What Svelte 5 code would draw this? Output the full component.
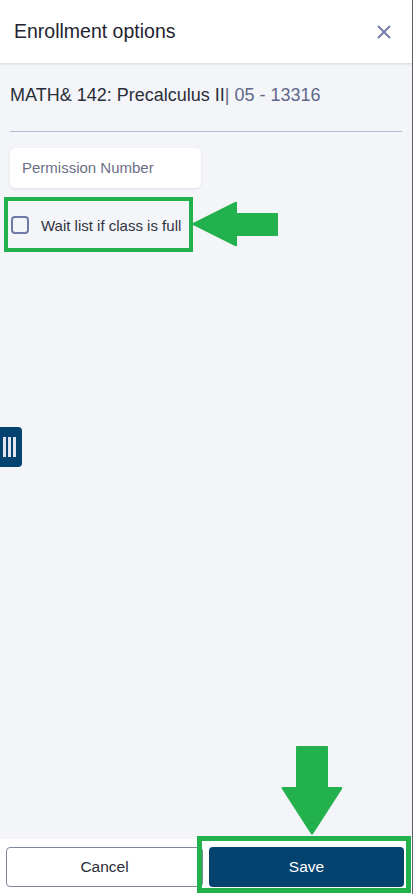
<script>
  let permission = '';
  let waitlist = false;
</script>

<div class="panel">
  <header class="head">
    <h1>Enrollment options</h1>
    <button class="close" aria-label="Close">
      <svg width="14" height="14" viewBox="0 0 14 14"><path d="M1 1 L13 13 M13 1 L1 13" stroke="#6f7aa3" stroke-width="1.8" fill="none" /></svg>
    </button>
  </header>

  <main class="body">
    <p class="course">MATH&amp; 142: Precalculus II<span class="meta">| 05 - 13316</span></p>
    <hr />
    <input class="permission" placeholder="Permission Number" bind:value={permission} />
    <label class="wait">
      <input type="checkbox" bind:checked={waitlist} />
      <span class="box"></span>
      <span>Wait list if class is full</span>
    </label>
  </main>

  <footer class="foot">
    <button class="btn cancel">Cancel</button>
    <button class="btn save">Save</button>
  </footer>

  <button class="tab" aria-label="Open menu"><span></span><span></span><span></span></button>

  <!-- green callouts drawn on top of the screenshot -->
  <div class="mark mark-wait"></div>
  <div class="mark mark-save"></div>
  <svg class="arrow arrow-left" width="88" height="46" viewBox="0 0 88 46">
    <path d="M0 23 L44 1 Q46 0 46 2 L46 12 L86 12 Q87 12 87 13 L87 34 Q87 35 86 35 L46 35 L46 44 Q46 46 44 45 Z" fill="#22b14c" />
  </svg>
  <svg class="arrow arrow-down" width="62" height="90" viewBox="0 0 62 90">
    <path d="M15 1 Q15 0 16 0 L46 0 Q47 0 47 1 L47 41 L60 41 Q62 41 61 43 L32 88 Q31 89 30 88 L1 43 Q0 41 2 41 L15 41 Z" fill="#22b14c" />
  </svg>
</div>

<style>
  :global(body) {
    margin: 0;
    font-family: "Liberation Sans", Arial, sans-serif;
  }
  .panel {
    position: relative;
    width: 412px;
    height: 894px;
    display: flex;
    flex-direction: column;
    background: #f4f5f9;
    border-right: 1px solid #5b5f66;
    overflow: hidden;
  }
  .head {
    height: 63px;
    flex: none;
    display: flex;
    align-items: center;
    justify-content: space-between;
    padding: 0 21px 0 14px;
    background: #fff;
    box-shadow: 0 1px 2px rgba(40, 50, 90, 0.15);
    z-index: 1;
  }
  h1 {
    margin: 0;
    font-size: 19.5px;
    font-weight: 400;
    color: #1f2430;
  }
  .close {
    padding: 0;
    border: 0;
    background: none;
    display: flex;
  }
  .body {
    flex: 1;
    padding: 0 10px;
    min-height: 0;
  }
  .course {
    margin: 0;
    padding-top: 22px;
    height: 46px;
    font-size: 18px;
    line-height: 20px;
    color: #2a2e38;
  }
  .meta {
    color: #5e6788;
  }
  hr {
    margin: 0;
    border: 0;
    border-top: 1px solid #b5b8cf;
  }
  .permission {
    display: block;
    box-sizing: border-box;
    width: 191px;
    height: 40px;
    margin-top: 16px;
    padding: 0 12px 2px;
    border: 0;
    border-radius: 5px;
    background: #fff;
    box-shadow: 0 1px 3px rgba(60, 70, 110, 0.12);
    font: 15px "Liberation Sans", Arial, sans-serif;
  }
  .permission::placeholder {
    color: #6b7088;
    opacity: 1;
  }
  .wait {
    display: flex;
    align-items: center;
    gap: 12px;
    margin: 27px 0 0 1px;
    height: 20px;
    font-size: 15px;
    color: #2f3340;
  }
  .wait input {
    display: none;
  }
  .box {
    box-sizing: border-box;
    width: 18px;
    height: 18px;
    border: 2px solid #6f7aa8;
    border-radius: 4px;
  }
  .foot {
    flex: none;
    height: 55px;
    display: flex;
    gap: 6px;
    padding: 8px 8px 0 6px;
    box-sizing: border-box;
    background: #fff;
  }
  .btn {
    flex: 1;
    height: 40px;
    border-radius: 4px;
    font: 15.5px "Liberation Sans", Arial, sans-serif;
  }
  .cancel {
    background: #fff;
    border: 1px solid #7d8798;
    color: #2a2e38;
  }
  .save {
    background: #04426f;
    border: 0;
    color: #fff;
  }
  .tab {
    position: absolute;
    left: 0;
    top: 427px;
    width: 22px;
    height: 40px;
    padding: 0 0 0 3px;
    border: 0;
    border-radius: 0 4px 4px 0;
    background: #04426f;
    display: flex;
    align-items: center;
    gap: 2.5px;
  }
  .tab span {
    width: 2.5px;
    height: 20px;
    background: #dfe6ef;
  }
  .mark {
    position: absolute;
    box-sizing: border-box;
    border: 4px solid #22b14c;
  }
  .mark-wait {
    left: 4px;
    top: 197px;
    width: 189px;
    height: 55px;
  }
  .mark-save {
    left: 197px;
    top: 836px;
    width: 214px;
    height: 57px;
    border-width: 5px;
  }
  .arrow {
    position: absolute;
  }
  .arrow-left {
    left: 191px;
    top: 201px;
  }
  .arrow-down {
    left: 281px;
    top: 746px;
  }
</style>
